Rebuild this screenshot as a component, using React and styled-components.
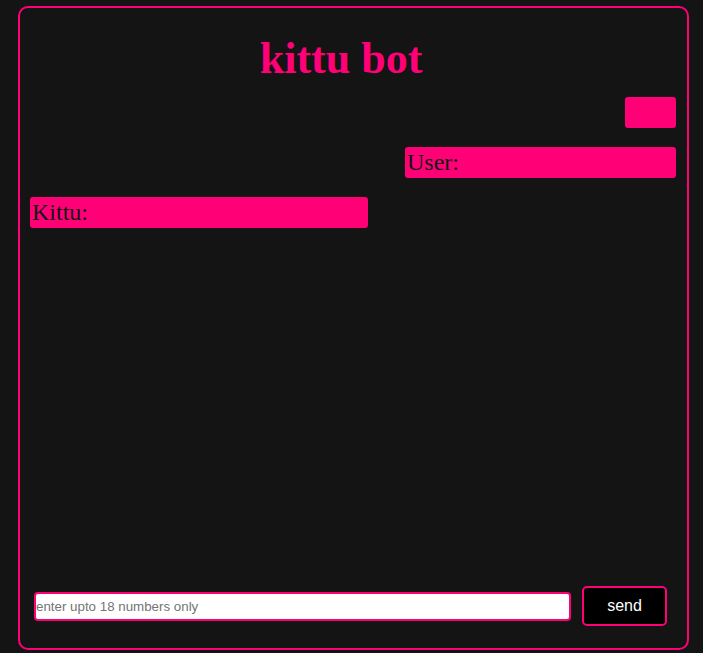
import React from "react";
import styled, { createGlobalStyle } from "styled-components";

const GlobalStyle = createGlobalStyle`
    html, body {
        margin: 0;
        padding: 0;
        background: #141414;
    }
    body {
        font-family: "Liberation Serif", "Times New Roman", serif;
    }
`;

const Page = styled.div`
    width: 703px;
    height: 653px;
    padding: 6px 14px 3px 18px;
    box-sizing: border-box;
`;

const ChatBox = styled.div`
    height: 644px;
    box-sizing: border-box;
    border: 2px solid #ff0077;
    border-radius: 10px;
    display: flex;
    flex-direction: column;
    padding: 0 11px 0 10px;
`;

const Title = styled.h1`
    margin: 25px 0 0;
    padding-right: 24px;
    height: 64px;
    text-align: center;
    color: #ff0077;
    font-size: 44px;
    font-weight: bold;
    line-height: 51px;
`;

const Messages = styled.div`
    flex: 1;
    display: flex;
    flex-direction: column;
    gap: 19px;
`;

const Bubble = styled.div`
    align-self: ${(p) => (p.$user ? "flex-end" : "flex-start")};
    width: ${(p) => p.$w}px;
    height: 31px;
    box-sizing: border-box;
    background: #ff0077;
    border-radius: 3px;
    padding: 0 2px;
    color: #141414;
    font-size: 24px;
    line-height: 31px;
`;

const Footer = styled.div`
    display: flex;
    align-items: center;
    gap: 11px;
    padding: 0 9px 22px 4px;
`;

const Input = styled.input`
    flex: 1;
    height: 29px;
    box-sizing: border-box;
    border: 2px solid #ff0077;
    border-radius: 4px;
    background: #fff;
    padding: 0;
    font-family: "Liberation Sans", Arial, sans-serif;
    font-size: 13.33px;
    outline: none;
    &::placeholder {
        color: #757575;
    }
`;

const SendButton = styled.button`
    width: 85px;
    height: 40px;
    box-sizing: border-box;
    background: #000;
    border: 2px solid #ff0077;
    border-radius: 5px;
    color: #fff;
    font-family: "Liberation Sans", Arial, sans-serif;
    font-size: 16px;
`;

const App = () => {
    return (
        <Page>
            <GlobalStyle />
            <ChatBox>
                <Title>kittu bot</Title>
                <Messages>
                    <Bubble $user $w={51} />
                    <Bubble $user $w={271}>User:</Bubble>
                    <Bubble $w={338}>Kittu:</Bubble>
                </Messages>
                <Footer>
                    <Input placeholder="enter upto 18 numbers only" />
                    <SendButton>send</SendButton>
                </Footer>
            </ChatBox>
        </Page>
    );
};

export default App;
